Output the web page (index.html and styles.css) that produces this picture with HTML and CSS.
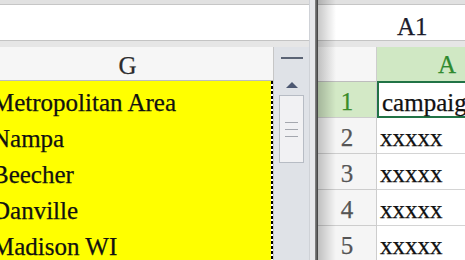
FILE: index.html
```html
<!DOCTYPE html>
<html lang="en">
<head>
    <meta charset="UTF-8">
    <title>Split Sheet View</title>
    <link rel="stylesheet" href="styles.css">
</head>
<body>
    <div class="window">
        <div class="pane pane-left">
            <div class="pane-main">
                <div class="topband"></div>
                <div class="formula"></div>
                <div class="sep"></div>
                <div class="sheet-area">
                    <div class="sheet">
                        <div class="col-head">G</div>
                        <div class="cells">
                            <div class="cell">Metropolitan Area</div>
                            <div class="cell">Nampa</div>
                            <div class="cell">Beecher</div>
                            <div class="cell">Danville</div>
                            <div class="cell">Madison WI</div>
                        </div>
                    </div>
                    <div class="vscroll">
                        <div class="vs-split"></div>
                        <div class="vs-up"></div>
                        <div class="vs-thumb">
                            <span></span>
                            <span></span>
                            <span></span>
                        </div>
                    </div>
                </div>
            </div>
            <div class="pane-edge"></div>
        </div>
        <div class="divider"></div>
        <div class="pane pane-right">
            <div class="topband"></div>
            <div class="formula namebox">A1</div>
            <div class="sep"></div>
            <div class="grid">
                <div class="row head-row">
                    <div class="rh corner"></div>
                    <div class="ch active">A</div>
                </div>
                <div class="row">
                    <div class="rh active">1</div>
                    <div class="cell2 selected">campaign</div>
                </div>
                <div class="row">
                    <div class="rh">2</div>
                    <div class="cell2">xxxxx</div>
                </div>
                <div class="row">
                    <div class="rh">3</div>
                    <div class="cell2">xxxxx</div>
                </div>
                <div class="row">
                    <div class="rh">4</div>
                    <div class="cell2">xxxxx</div>
                </div>
                <div class="row">
                    <div class="rh">5</div>
                    <div class="cell2">xxxxx</div>
                </div>
            </div>
            <div class="shade"></div>
        </div>
    </div>
</body>
</html>
```

FILE: styles.css
```css
body {
    margin: 0;
    overflow: hidden;
    font-family: "Liberation Serif", "Times New Roman", serif;
    font-size: 25px;
    color: #111;
    background: #fff;
    -webkit-text-stroke: 0.25px currentColor;
}
.window {
    display: flex;
    width: 465px;
    height: 260px;
    overflow: hidden;
}
.pane {
    display: flex;
    height: 260px;
    overflow: hidden;
}
.pane-left {
    width: 315px;
    flex: none;
}
.pane-main {
    width: 309px;
    display: flex;
    flex-direction: column;
    overflow: hidden;
}
.pane-edge {
    width: 5px;
    background: #e7e8eb;
    border-left: 1px solid #cfd2d7;
}
.divider {
    width: 3px;
    flex: none;
    background: linear-gradient(to right, #8a8a8a, #3c3c3c);
}
.pane-right {
    flex: 1;
    flex-direction: column;
    position: relative;
}
.topband {
    height: 4px;
    background: #e1e1e1;
    border-bottom: 1px solid #c6c6c6;
    flex: none;
}
.formula {
    height: 35px;
    background: #fff;
    flex: none;
}
.namebox {
    display: flex;
    align-items: flex-end;
    box-sizing: border-box;
    padding: 0 0 1px 79px;
    line-height: 25px;
    color: #1c1c2c;
}
.sep {
    height: 6px;
    background: #e6e6e6;
    border-top: 1px solid #c4c4c4;
    flex: none;
}

/* left pane sheet */
.sheet-area {
    display: flex;
    flex: 1;
    overflow: hidden;
}
.sheet {
    width: 291px;
    margin-left: -18px;
    flex: none;
    border-right: 1px solid #c6c6c6;
}
.col-head {
    height: 34px;
    line-height: 34px;
    padding-top: 2px;
    box-sizing: border-box;
    text-align: center;
    background: #f6f6f6;
    border-bottom: 1px solid #bdbdbd;
    color: #2b2b2b;
}
.cells {
    background: repeating-linear-gradient(#000 0 3px, #fff 3px 5px) right top / 2px 100% no-repeat, #ff0;
    height: 200px;
}
.cell {
    height: 36px;
    box-sizing: border-box;
    display: flex;
    align-items: flex-end;
    padding: 0 0 2px 10px;
    line-height: 25px;
    white-space: nowrap;
}
.vscroll {
    width: 35px;
    flex: none;
    background: #dfe2e7;
    display: flex;
    flex-direction: column;
    align-items: center;
}
.vs-split {
    width: 22px;
    height: 2px;
    margin-top: 10px;
    background: #5b6475;
}
.vs-up {
    width: 0;
    height: 0;
    margin-top: 23px;
    border-left: 6px solid transparent;
    border-right: 6px solid transparent;
    border-bottom: 6px solid #4d5872;
}
.vs-thumb {
    width: 25px;
    height: 68px;
    margin-top: 7px;
    box-sizing: border-box;
    background: #f1f1f3;
    border: 1px solid #b7bcc4;
    display: flex;
    flex-direction: column;
    align-items: center;
    gap: 6px;
    padding-top: 26px;
}
.vs-thumb span {
    width: 13px;
    height: 1px;
    background: #a4a7ae;
}

/* right pane grid */
.grid {
    flex: 1;
}
.row {
    display: flex;
    height: 36px;
    box-sizing: border-box;
}
.head-row {
    height: 35px;
}
.rh {
    width: 58px;
    flex: none;
    border-right: 1px solid #cdcdcd;
    border-bottom: 1px solid #cdcdcd;
    background: #f5f5f5;
    color: #555;
    display: flex;
    align-items: flex-end;
    justify-content: center;
    padding-bottom: 3px;
    line-height: 25px;
}
.rh.corner {
    background: #f6f6f6;
    border-bottom-color: #bdbdbd;
}
.rh.active {
    background: #d3e9c6;
    color: #3a8c2a;
}
.ch {
    width: 140px;
    flex: none;
    display: flex;
    align-items: center;
    justify-content: center;
    padding-top: 2px;
    border-bottom: 1px solid #bdbdbd;
    border-right: 1px solid #cdcdcd;
}
.ch.active {
    background: #d0e8c4;
    color: #2f8a2f;
}
.cell2 {
    width: 140px;
    flex: none;
    box-sizing: border-box;
    border-right: 1px solid #d4d4d4;
    border-bottom: 1px solid #d4d4d4;
    display: flex;
    align-items: flex-end;
    padding: 0 0 3px 3px;
    line-height: 25px;
    white-space: nowrap;
}
.cell2.selected {
    border: 2px solid #217346;
    padding: 0 0 1px 3px;
    margin-top: -1px;
}
.shade {
    position: absolute;
    left: 0;
    top: 0;
    bottom: 0;
    width: 18px;
    pointer-events: none;
    background: linear-gradient(to right, rgba(0, 0, 0, 0.22), rgba(0, 0, 0, 0));
}
```
